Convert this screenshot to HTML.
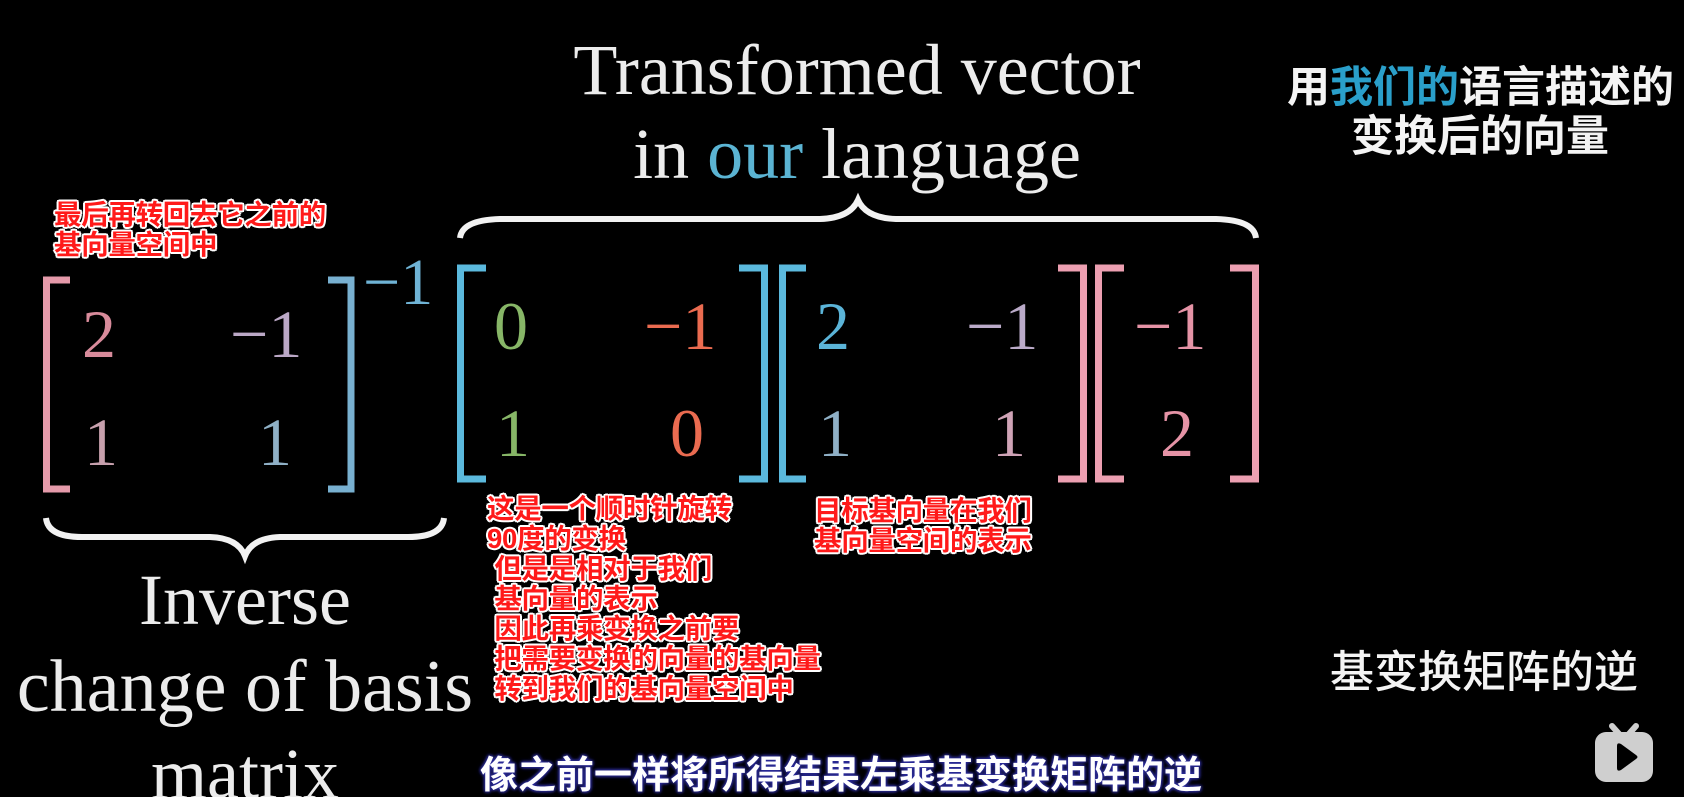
<!DOCTYPE html>
<html><head><meta charset="utf-8">
<style>
html,body{margin:0;padding:0;background:#000;}
#c{position:relative;width:1684px;height:797px;overflow:hidden;background:#000;}
.t{position:absolute;white-space:nowrap;}
.serif{font-family:"Liberation Serif",serif;color:#ececec;}
.num{font-family:"Liberation Serif",serif;font-size:68px;line-height:1;}
.red{font-family:"Liberation Sans","Noto Sans CJK SC",sans-serif;font-weight:700;font-size:27.5px;color:#ff1a1a;line-height:30px;
text-shadow:-2px 0 #fff,2px 0 #fff,0 -2px #fff,0 2px #fff,-1.5px -1.5px #fff,1.5px 1.5px #fff,-1.5px 1.5px #fff,1.5px -1.5px #fff;letter-spacing:-0.3px;}
.cjk{font-family:"Liberation Sans","Noto Sans CJK SC",sans-serif;color:#f4f4f4;}
</style></head><body><div id="c">

<svg width="1684" height="797" style="position:absolute;left:0;top:0" fill="none" stroke-linejoin="miter" stroke-linecap="butt">
 <path d="M70 280 H46.5 V489 H70" stroke="#e59aaa" stroke-width="7"/>
 <path d="M328 280 H351 V489 H328" stroke="#78b0d0" stroke-width="7"/>
 <path d="M486 268 H460.5 V479 H486" stroke="#5bb9dd" stroke-width="7"/>
 <path d="M739 268 H764.5 V479 H739" stroke="#5bb9dd" stroke-width="7"/>
 <path d="M806 268 H782.5 V479 H806" stroke="#5bb9dd" stroke-width="7"/>
 <path d="M1058 268 H1083.5 V479 H1058" stroke="#ec9fb1" stroke-width="7"/>
 <path d="M1124 268 H1098.5 V479 H1124" stroke="#ec9fb1" stroke-width="7"/>
 <path d="M1230 268 H1255.5 V479 H1230" stroke="#ec9fb1" stroke-width="7"/>
 <path d="M460 238 Q462 220 500 219 L820 219 Q850 218 858 200 Q866 218 896 219 L1216 219 Q1254 220 1256 238" stroke="#f2f2f2" stroke-width="6"/>
 <path d="M46 518 Q48 537 82 537 L210 537 Q238 538 245 556 Q252 538 280 537 L408 537 Q442 537 444 518" stroke="#f2f2f2" stroke-width="6"/>
 <rect x="1595" y="732" width="58" height="50" rx="11" fill="#cfcfcf"/>
 <path d="M1612 726 L1620 735 M1636 726 L1628 735" stroke="#cfcfcf" stroke-width="6" stroke-linecap="round"/>
 <path d="M1617 746 L1617 768 Q1617 772 1621 770 L1636 759 Q1639 757 1636 755 L1621 744 Q1617 742 1617 746 Z" fill="#000"/>
</svg>

<div class="t serif" style="left:457px;width:800px;text-align:center;top:30px;font-size:72px;line-height:80px;">Transformed vector</div>
<div class="t serif" style="left:457px;width:800px;text-align:center;top:114px;font-size:72px;line-height:80px;">in <span style="color:#5bb4d3">our</span> language</div>

<div class="t cjk" style="left:1287px;top:63px;font-size:43px;font-weight:700;line-height:50px;">用<span style="color:#2a9fca">我们的</span>语言描述的</div>
<div class="t cjk" style="left:1351px;top:112px;font-size:43px;font-weight:700;line-height:50px;">变换后的向量</div>

<div class="t red" style="left:54px;top:200px;">最后再转回去它之前的<br>基向量空间中</div>

<div class="t num" style="left:82px;top:300px;color:#d88b9b;">2</div>
<div class="t num" style="left:230px;top:300px;color:#bba8c6;">−1</div>
<div class="t num" style="left:84px;top:408px;color:#c7a0ad;">1</div>
<div class="t num" style="left:258px;top:408px;color:#8fb0c6;">1</div>
<div class="t num" style="left:363px;top:250px;font-size:66px;color:#6fb3d5;">−1</div>

<div class="t num" style="left:494px;top:292px;color:#87b667;">0</div>
<div class="t num" style="left:644px;top:292px;color:#ea6b50;">−1</div>
<div class="t num" style="left:496px;top:399px;color:#87b667;">1</div>
<div class="t num" style="left:670px;top:399px;color:#ea6b50;">0</div>

<div class="t num" style="left:816px;top:292px;color:#5bb4d8;">2</div>
<div class="t num" style="left:966px;top:292px;color:#baaac8;">−1</div>
<div class="t num" style="left:818px;top:399px;color:#8fb0c6;">1</div>
<div class="t num" style="left:992px;top:399px;color:#cfa3b6;">1</div>

<div class="t num" style="left:1134px;top:292px;color:#e593a6;">−1</div>
<div class="t num" style="left:1160px;top:399px;color:#e593a6;">2</div>

<div class="t serif" style="left:0;width:490px;text-align:center;top:560px;font-size:72px;line-height:80px;">Inverse</div>
<div class="t serif" style="left:0;width:490px;text-align:center;top:647px;font-size:74px;line-height:80px;">change of basis</div>
<div class="t serif" style="left:0;width:490px;text-align:center;top:734px;font-size:72px;line-height:80px;">matrix</div>

<div class="t red" style="left:487px;top:494px;">这是一个顺时针旋转<br>90度的变换<br>&nbsp;但是是相对于我们<br>&nbsp;基向量的表示<br>&nbsp;因此再乘变换之前要<br>&nbsp;把需要变换的向量的基向量<br>&nbsp;转到我们的基向量空间中</div>
<div class="t red" style="left:814px;top:496px;">目标基向量在我们<br>基向量空间的表示</div>

<div class="t cjk" style="left:1330px;top:648px;font-size:44px;font-weight:500;line-height:50px;">基变换矩阵的逆</div>

<div class="t cjk" style="left:480px;top:754px;font-size:38px;font-weight:700;line-height:44px;color:#fff;text-shadow:0 0 3px #2a2a9a,0 0 3px #2a2a9a,0 0 5px #3a3ab0;">像之前一样将所得结果左乘基变换矩阵的逆</div>

</div></body></html>
